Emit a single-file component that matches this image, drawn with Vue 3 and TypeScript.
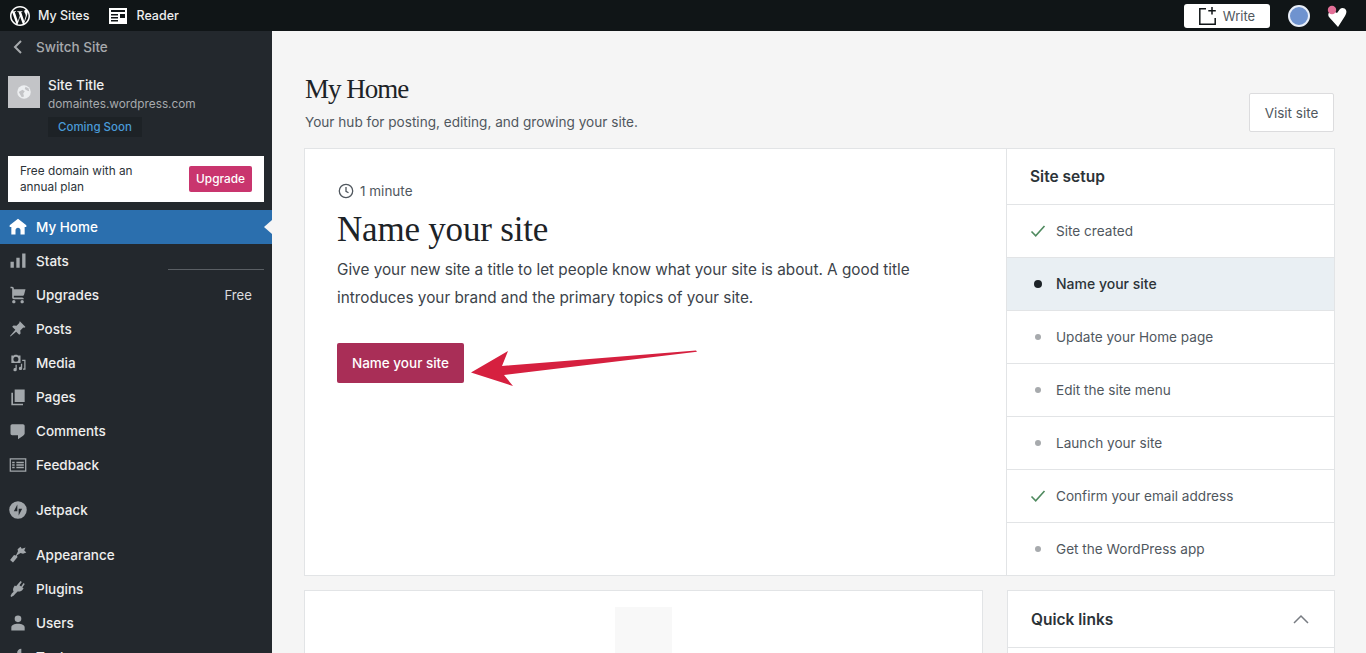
<script setup lang="ts">
interface MenuItem { label: string; d: string; badge?: string; active?: boolean; gap?: boolean; rule?: boolean }

const menu: MenuItem[] = [
  { label: 'My Home', active: true, d: 'M22 10L12 2 2 10v2h2v9h5v-5c0-1.66 1.34-3 3-3s3 1.34 3 3v5h5v-9h2v-2z' },
  { label: 'Stats', rule: true, d: 'M3 13h4v7H3zM10 8h4v12h-4zM17 3h4v17h-4z' },
  { label: 'Upgrades', badge: 'Free', d: 'M9 20c0 1.1-.9 2-2 2s-2-.9-2-2 .9-2 2-2 2 .9 2 2zm8-2c-1.1 0-2 .9-2 2s.9 2 2 2 2-.9 2-2-.9-2-2-2zm.4-5c.94 0 1.75-.65 1.95-1.57L21 5H7V4c0-1.1-.9-2-2-2H3v2h2v11c0 1.1.9 2 2 2h12c0-1.1-.9-2-2-2H7v-2h10.4z' },
  { label: 'Posts', d: 'M14.5 3l6.5 6.5-1.5 1-1.2-.4-3.6 3.6.4 3.6-1.6 1.6-3.7-3.7L3 21l-.6-.6L8.800 13 5 9.300l1.600-1.600 3.600.4 3.600-3.600-.4-1.200z' },
  { label: 'Media', d: 'M4 3h3l1-1h3l1 1h3v9H4zM9.500 4.500a3 3 0 1 0 0 6 3 3 0 0 0 0-6zM17 8h4v12h-3v-1.500h1.500V9.500H17zM9 14h1.500v6a2 2 0 1 1-1.500-1.900zM15.500 13H17v5.500a2 2 0 1 1-1.500-1.900z' },
  { label: 'Pages', d: 'M8 3h12v15H8zM4 7h2v13h12v2H4z' },
  { label: 'Comments', d: 'M3 6v9c0 1.100.9 2 2 2h7v5l5.300-3.800c1.050-.75 2.700-2 2.700-3.300V6c0-1.100-.9-2-2-2H5C3.900 4 3 4.900 3 6z' },
  { label: 'Feedback', d: 'M2 4h20v16H2zM3.500 5.500v13h17v-13zM5 8h3v2H5zM10 8h9v2h-9zM5 11h3v2H5zM10 11h9v2h-9zM5 14h3v2H5zM10 14h9v2h-9z' },
  { label: 'Jetpack', gap: true, d: 'M12 1.500a10.500 10.500 0 1 0 0 21 10.500 10.500 0 0 0 0-21zM11.200 5.500v8H7zM12.800 18.500v-8H17z' },
  { label: 'Appearance', gap: true, d: 'M15 2l1.500 2.500L21 3l-1.500 3.500L22 9l-4 1.500-3-1-4.500 3 1 2L6 21l-3.500-3 4.700-6 2.300.500 2.500-5-.5-2.500z' },
  { label: 'Plugins', d: 'M15 2.500l1.600 1-2.800 4 2 1.400 2.800-4 1.500 1-2.900 4.200 1.500 1-1 1.500c-1.500 2.200-4 3-6.200 2.300L8.500 18 7 19.800 4 21.500l-1-1 1.500-3 2.200-2.300c-1-1.800-.8-4.200.5-6l1-1.500 1.500 1z' },
  { label: 'Users', d: 'M12 3a4 4 0 1 1 0 8 4 4 0 0 1 0-8zm0 10c-4.400 0-8 1.800-8 4v4h16v-4c0-2.200-3.600-4-8-4z' },
  { label: 'Tools', d: 'M16 2c-3 0-5 2-5 5l-8 9v3l2 2h3l9-8c3 0 5-2 5-5l-3 2-3-3z' }
]

interface Step { label: string; state: 'done' | 'current' | 'todo' }

const steps: Step[] = [
  { label: 'Site created', state: 'done' },
  { label: 'Name your site', state: 'current' },
  { label: 'Update your Home page', state: 'todo' },
  { label: 'Edit the site menu', state: 'todo' },
  { label: 'Launch your site', state: 'todo' },
  { label: 'Confirm your email address', state: 'done' },
  { label: 'Get the WordPress app', state: 'todo' }
]
</script>

<template>
  <div class="page">
    <header class="topbar">
      <div class="top-link">
        <svg class="wp" viewBox="0 0 24 24" width="24" height="24"><path fill="#fff" d="M12 2C6.480 2 2 6.480 2 12s4.480 10 10 10 10-4.480 10-10S17.520 2 12 2zM3.500 12c0-1.230.26-2.400.74-3.460l4.050 11.110C5.460 18.270 3.500 15.360 3.500 12zm8.500 8.500c-.83 0-1.640-.12-2.400-.35l2.550-7.410 2.610 7.160c.02.04.04.08.06.12-.88.31-1.830.48-2.820.48zm1.170-12.490c.51-.03.97-.08.97-.08.46-.05.4-.73-.05-.7 0 0-1.380.11-2.270.11-.83 0-2.240-.11-2.240-.11-.46-.03-.51.67-.05.7 0 0 .43.05.89.08l1.320 3.630-1.860 5.580-3.100-9.210c.51-.03.97-.08.97-.08.46-.05.4-.73-.05-.7 0 0-1.380.11-2.270.11-.16 0-.35 0-.55-.01C6.420 4.910 9.030 3.500 12 3.500c2.210 0 4.230.85 5.740 2.230-.04 0-.07-.01-.11-.01-.83 0-1.430.73-1.430 1.510 0 .7.4 1.290.84 1.990.32.57.7 1.290.7 2.340 0 .73-.28 1.570-.65 2.750l-.85 2.830-3.070-9.130zm3.100 11.330l2.600-7.510c.49-1.210.65-2.180.65-3.040 0-.31-.02-.6-.06-.87A8.460 8.460 0 0 1 20.500 12c0 3.130-1.700 5.870-4.230 7.340z"/></svg>
        <span>My Sites</span>
      </div>
      <div class="top-link reader">
        <svg viewBox="0 0 18 16" width="18" height="16"><path fill="#fff" d="M0 0h18v16H0z"/><path fill="#101517" d="M2 2h14v2H2zM2 6h7v1.500H2zM2 9h7v1.500H2zM2 12h7v1.500H2zM11 6h5v4h-5z"/></svg>
        <span>Reader</span>
      </div>
      <div class="top-right">
        <div class="write">
          <svg viewBox="0 0 20 20" width="20" height="20"><path fill="none" stroke="#101517" stroke-width="1.500" d="M9 2.800H2.800v15.400h15.400V12M15 1v7.500M11.300 4.800h7.500"/></svg>
          <span>Write</span>
        </div>
        <span class="avatar"></span>
        <span class="notif">
          <svg viewBox="0 0 24 24" width="24" height="24"><path fill="#fff" d="M13 23l-9-10c-2-3 1-7 4-6l4 2 3-4c2-2 5-1 6 1 1 2 0 4-1 6z"/><circle cx="7" cy="6" r="4.200" fill="#e26f97"/></svg>
        </span>
      </div>
    </header>

    <div class="body">
      <aside class="sidebar">
        <div class="switch">
          <svg viewBox="0 0 12 16" width="12" height="16"><path fill="none" stroke="#a7aaad" stroke-width="2" d="M9 2L3 8l6 6"/></svg>
          <span>Switch Site</span>
        </div>
        <div class="site">
          <div class="site-icon">
            <svg viewBox="0 0 24 24" width="18" height="18"><circle cx="12" cy="12" r="9" fill="#eceef0"/><path fill="#c3c4c7" d="M5 12l5-3 3 2-2 3 1 4-3 1zM14 5l4 2 1 4-3-1-3-2z"/></svg>
          </div>
          <div class="site-text">
            <div class="site-title">Site Title</div>
            <div class="site-domain">domaintes.wordpress.com</div>
            <span class="soon">Coming Soon</span>
          </div>
        </div>
        <div class="promo">
          <p>Free domain with an annual plan</p>
          <span class="upgrade">Upgrade</span>
        </div>
        <nav class="menu">
          <div v-for="item in menu" :key="item.label" class="item" :class="{ active: item.active, gap: item.gap }">
            <svg viewBox="0 0 24 24" width="20" height="20" class="item-icon"><path :d="item.d" fill-rule="evenodd"/></svg>
            <span>{{ item.label }}</span>
            <span v-if="item.badge" class="badge">{{ item.badge }}</span>
            <i v-if="item.active" class="notch"></i>
            <i v-if="item.rule" class="rule"></i>
          </div>
        </nav>
      </aside>

      <main class="main">
        <div class="head">
          <div>
            <h1>My Home</h1>
            <p>Your hub for posting, editing, and growing your site.</p>
          </div>
          <span class="visit">Visit site</span>
        </div>

        <section class="card task">
          <div class="task-main">
            <div class="time">
              <svg viewBox="0 0 16 16" width="16" height="16"><circle cx="8" cy="8" r="6.700" fill="none" stroke="#50575e" stroke-width="1.300"/><path fill="none" stroke="#50575e" stroke-width="1.300" d="M8 4v4.300l2.500 1.500"/></svg>
              <span>1 minute</span>
            </div>
            <h2>Name your site</h2>
            <p class="desc">Give your new site a title to let people know what your site is about. A good title introduces your brand and the primary topics of your site.</p>
            <span class="cta">Name your site</span>
            <svg class="arrow" viewBox="0 0 230 40" width="230" height="40"><path fill="#d6203f" d="M0 24.500L37 3 31 18 225 2.500 226 3.700 33 27 42 38z"/></svg>
          </div>
          <div class="setup">
            <h3>Site setup</h3>
            <div v-for="step in steps" :key="step.label" class="step" :class="step.state">
              <span class="mark">
                <svg v-if="step.state === 'done'" viewBox="0 0 16 16" width="16" height="16"><path fill="none" stroke="#4f8a5f" stroke-width="1.600" d="M1.500 8.500l4.200 4.300L14.500 3"/></svg>
                <i v-else class="dot"></i>
              </span>
              <span>{{ step.label }}</span>
            </div>
          </div>
        </section>

        <div class="lower">
          <section class="card lower-left"><div class="placeholder"></div></section>
          <section class="card quick">
            <div class="quick-head">
              <span>Quick links</span>
              <svg viewBox="0 0 18 10" width="18" height="10"><path fill="none" stroke="#787c82" stroke-width="1.500" d="M2 9l7-7 7 7"/></svg>
            </div>
          </section>
        </div>
      </main>
    </div>
  </div>
</template>

<style>
html, body { margin: 0; overflow: hidden; background: #f5f5f5; }
</style>

<style scoped>
.page { height: 653px; overflow: hidden; display: flex; flex-direction: column; font-family: Inter, "Liberation Sans", sans-serif; font-size: 14px; color: #50575e; }
.topbar { height: 31px; flex: none; background: #101517; color: #eee; display: flex; align-items: center; font-size: 12.500px; padding-left: 8px; }
.top-link { display: flex; align-items: center; gap: 6px; font-weight: 500; }
.wp { flex: none; }
.reader { margin-left: 20px; gap: 9px; }
.top-right { margin-left: auto; display: flex; align-items: center; padding-right: 17px; }
.write { width: 86px; height: 24px; background: #fff; border-radius: 3px; display: flex; align-items: center; justify-content: center; gap: 6px; color: #50575e; font-size: 13px; box-sizing: border-box; padding-right: 2px; }
.avatar { width: 18px; height: 18px; border-radius: 50%; background: #6f93cf; border: 2px solid #e8eef8; margin-left: 18px; }
.notif { margin-left: 15px; width: 24px; height: 24px; }
.body { flex: 1; display: flex; min-height: 0; }
.sidebar { width: 272px; flex: none; background: #23282d; color: #eee; }
.switch { height: 32px; display: flex; align-items: center; gap: 12px; padding-left: 12px; color: #a7aaad; font-size: 13.500px; font-weight: 500; }
.site { display: flex; padding: 14px 8px 0; gap: 8px; height: 83px; box-sizing: border-box; margin-bottom: 1px; }
.site-icon { width: 32px; height: 32px; margin-top: -1px; background: #c3c4c7; display: flex; align-items: center; justify-content: center; }
.site-title { font-size: 13.500px; font-weight: 500; line-height: 18px; margin-top: -1px; }
.site-domain { font-size: 11.800px; line-height: 18px; color: #a7aaad; margin-top: 1px; }
.soon { display: inline-block; margin-top: 4px; padding: 0 10px; line-height: 20px; font-size: 11.500px; color: #4a9bd8; background: #1d2226; font-weight: 500; }
.promo { margin: 10px 8px 0; height: 46px; background: #fff; display: flex; align-items: center; justify-content: space-between; padding: 0 12px; color: #2c3338; }
.promo p { margin: 0; width: 130px; font-size: 11.800px; line-height: 16px; }
.upgrade { width: 63px; height: 26px; background: #c9356e; color: #fff; border-radius: 2px; font-size: 11.800px; font-weight: 500; display: flex; align-items: center; justify-content: center; }
.menu { margin-top: 8px; }
.item { position: relative; height: 34px; display: flex; align-items: center; padding: 0 20px 0 8px; gap: 8px; font-size: 13.500px; font-weight: 500; color: #eee; }
.item.gap { margin-top: 11px; }
.item.gap + .item:not(.gap) { margin-top: 0; }
.item-icon { fill: #a2a7ab; flex: none; }
.item.active { background: #2b6fae; color: #fff; }
.item.active .item-icon { fill: #fff; }
.badge { margin-left: auto; font-weight: 400; font-size: 13.200px; color: #dcdcde; }
.notch { position: absolute; right: 0; top: 10px; border: 7px solid transparent; border-right: 8px solid #f5f5f5; border-left: 0; }
.rule { position: absolute; left: 168px; top: 25px; width: 96px; height: 1px; background: #5a5f64; }
.main { flex: 1; min-width: 0; padding: 0 31px 0 32px; }
.head { display: flex; justify-content: space-between; align-items: flex-end; height: 117px; box-sizing: border-box; padding: 0 1px 16px; }
h1 { margin: 0; font-family: "Liberation Serif", serif; font-weight: 400; font-size: 27px; letter-spacing: -1px; line-height: 34px; color: #1d2327; }
.head p { margin: 6px 0 0; font-size: 13.600px; line-height: 20px; }
.visit { width: 85px; height: 39px; box-sizing: border-box; background: #fff; border: 1px solid #dcdcde; border-radius: 2px; display: flex; align-items: center; justify-content: center; font-size: 13.500px; }
.card { background: #fff; border: 1px solid #e2e4e6; box-sizing: border-box; }
.task { height: 428px; display: flex; }
.task-main { position: relative; flex: 1; min-width: 0; padding: 34px 31px 0 32px; }
.time { display: flex; align-items: center; gap: 6px; font-size: 13.500px; line-height: 16px; padding-left: 1px; }
h2 { margin: 8px 0 0; font-family: "Liberation Serif", serif; font-weight: 400; font-size: 35px; letter-spacing: -0.2px; line-height: 46px; color: #1d2327; }
.desc { margin: 3px 0 0; width: 620px; font-size: 15.300px; line-height: 28px; color: #3c434a; }
.cta { display: inline-flex; margin-top: 31px; width: 127px; height: 40px; align-items: center; justify-content: center; background: #a92e57; color: #fff; border-radius: 2px; font-size: 13.500px; font-weight: 500; }
.arrow { position: absolute; left: 166px; top: 199px; }
.setup { width: 328px; flex: none; border-left: 1px solid #e2e4e6; box-sizing: border-box; }
h3 { margin: 0; height: 56px; box-sizing: border-box; padding-left: 23px; display: flex; align-items: center; font-size: 15.500px; font-weight: 600; color: #2c3338; border-bottom: 1px solid #e2e4e6; }
.step { height: 53px; box-sizing: border-box; display: flex; align-items: center; padding-left: 23px; gap: 10px; font-size: 13.600px; border-bottom: 1px solid #e2e4e6; }
.step:last-child { border-bottom: 0; padding-bottom: 1px; }
.mark { width: 16px; display: flex; justify-content: center; }
.dot { width: 6px; height: 6px; border-radius: 50%; background: #a7aaad; }
.step.current { background: #e9eff3; color: #2c3338; font-weight: 500; font-size: 14px; padding-bottom: 1px; }
.step.current .dot { width: 8px; height: 8px; background: #1d2327; }
.lower { display: flex; justify-content: space-between; margin-top: 14px; }
.lower-left { width: 679px; height: 120px; display: flex; justify-content: center; padding-top: 16px; }
.placeholder { width: 57px; height: 100px; background: #f8f8f8; }
.quick { width: 328px; height: 120px; }
.quick-head { height: 56px; display: flex; align-items: center; justify-content: space-between; padding: 0 24px 0 23px; font-size: 15.500px; font-weight: 600; color: #2c3338; border-bottom: 1px solid #e2e4e6; }
</style>
